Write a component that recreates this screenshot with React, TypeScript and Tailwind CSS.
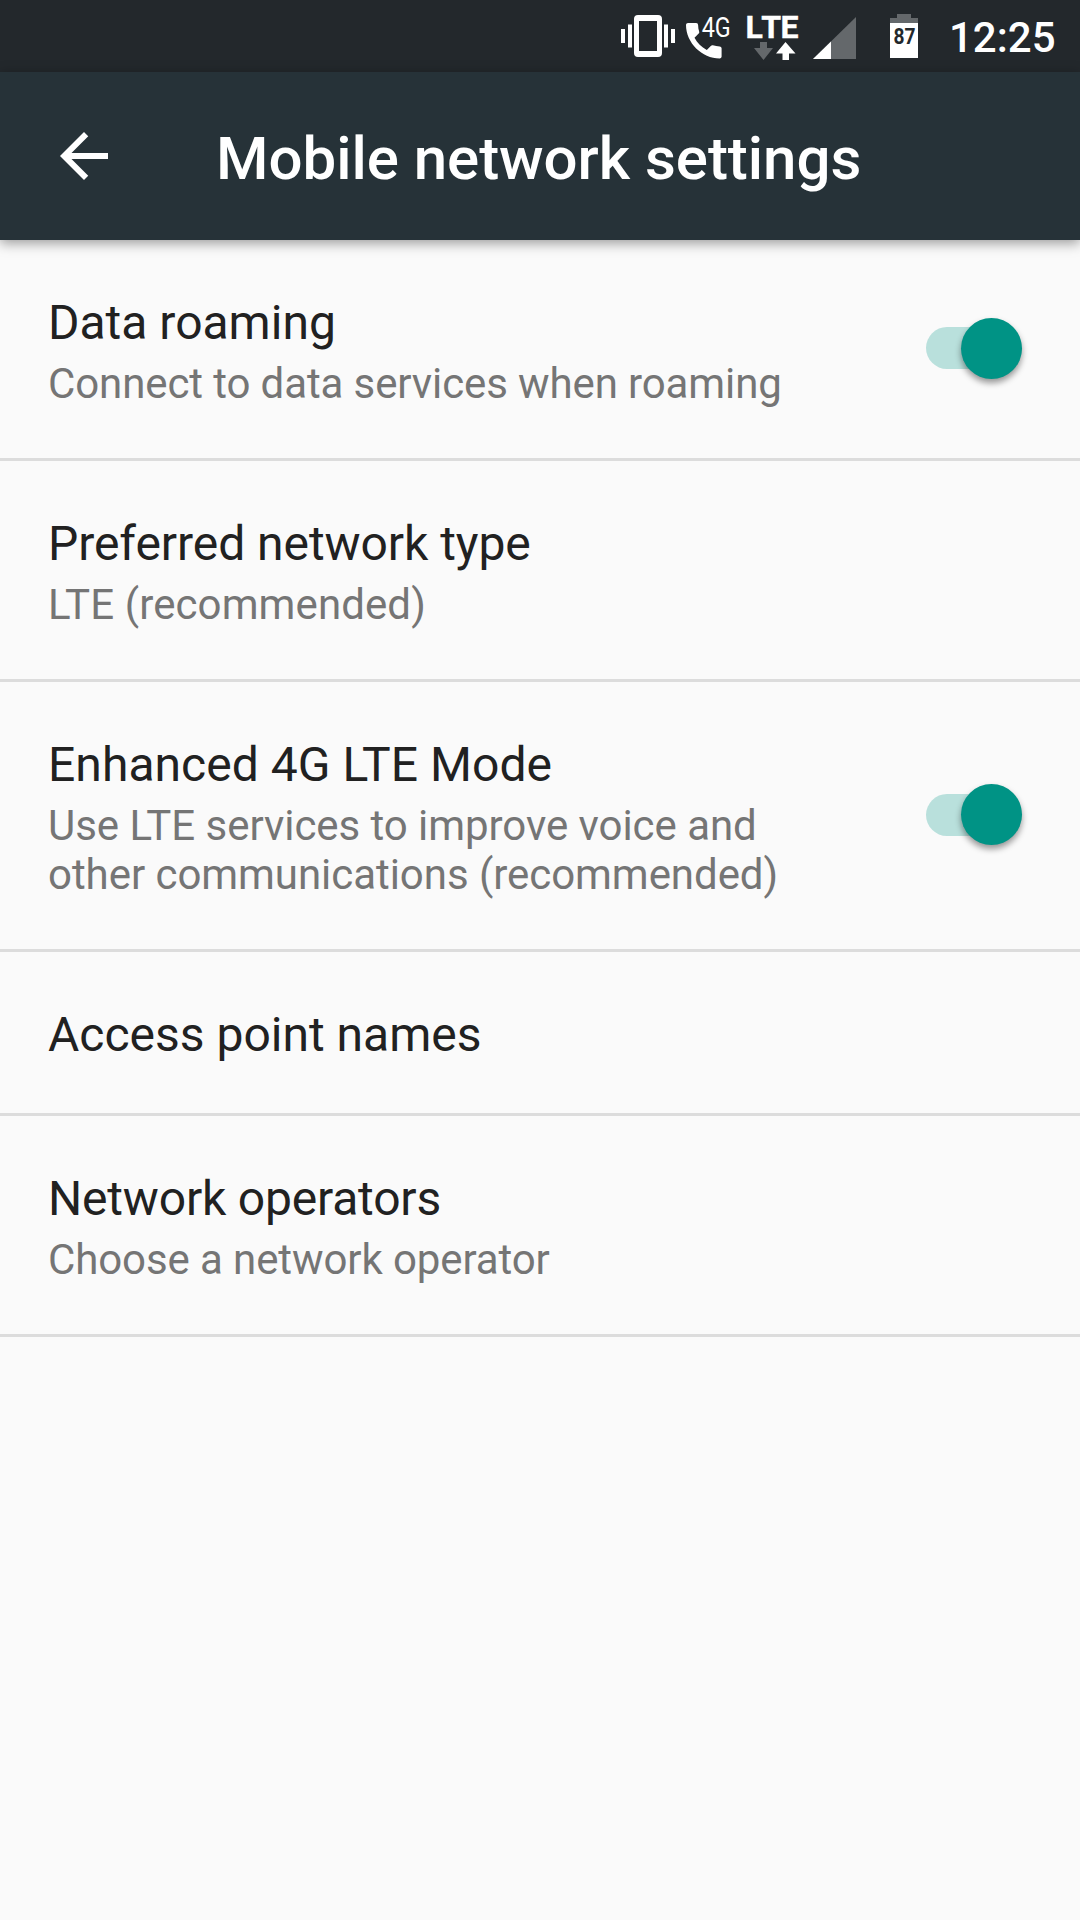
import React from 'react';

type Preference = {
  title: string;
  titleClass?: string;
  summary?: string;
  summaryClass?: string;
  enabled?: boolean;
};

const preferences: Preference[] = [
  {
    title: 'Data roaming',
    summary: 'Connect to data services when roaming',
    summaryClass: 'tracking-[-0.11px]',
    enabled: true,
  },
  {
    title: 'Preferred network type',
    titleClass: 'tracking-[-0.06px]',
    summary: 'LTE (recommended)',
    summaryClass: 'tracking-[0.1px]',
  },
  {
    title: 'Enhanced 4G LTE Mode',
    titleClass: 'tracking-[0.05px]',
    summary: 'Use LTE services to improve voice and other communications (recommended)',
    summaryClass: 'tracking-[-0.05px]',
    enabled: true,
  },
  { title: 'Access point names' },
  {
    title: 'Network operators',
    titleClass: 'tracking-[-0.19px]',
    summary: 'Choose a network operator',
    summaryClass: 'tracking-[-0.1px]',
  },
];

const VibrateIcon = () => (
  <svg width="54" height="42" viewBox="0 0 54 42" fill="#fff">
    <path fillRule="evenodd" d="M17 0h20a4 4 0 0 1 4 4v34a4 4 0 0 1-4 4H17a4 4 0 0 1-4-4V4a4 4 0 0 1 4-4zM18 6v30h18V6z" />
    <path d="M0 14h4v14H0zM7 9.500h4v23H7zM43 9.500h4v23h-4zM50 14h4v14h-4z" />
  </svg>
);

const CallIcon = () => (
  <svg width="50" height="54" viewBox="0 -10 50 54" fill="#fff">
    <path d="M2 8h8.200a1.900 1.900 0 0 1 1.900 1.900c0 2.400.4 4.600 1.100 6.800.2.600.1 1.300-.5 1.900l-4.200 4.200c2.800 5.400 6.900 9.400 12.300 12.200l4.200-4.200c.5-.5 1.200-.7 1.900-.5 2.100.7 4.400 1.100 6.800 1.100 1 0 1.900.8 1.900 1.900v8.200c0 1-.8 1.900-1.900 1.900C16 43.400 0 27.600 0 9.900 0 8.800.9 8 2 8z" />
    <text x="15.700" y="21.700" fontSize="27.500" fontFamily="Roboto, sans-serif" textLength="29" lengthAdjust="spacingAndGlyphs">4G</text>
  </svg>
);

const LteIcon = () => (
  <svg width="58" height="60" viewBox="-3 -14 58 60" fill="#fff">
    <text x="-1.500 14.200 33.400" y="22.700" fontSize="32" fontWeight="700" fontFamily="Roboto, sans-serif" stroke="#fff" strokeWidth="0.4">LTE</text>
    <path d="M13 27h7v6h6L16.500 45 7 33h6z" fill="#64686b" />
    <path d="M35.500 45v-6.500H29L38.500 27 48.500 38.500H42V45z" />
  </svg>
);

const SignalIcon = () => (
  <svg width="43" height="42" viewBox="0 0 43 42">
    <path d="M43 0v42H0z" fill="#64686b" />
    <path d="M18 24.500V42H0z" fill="#fff" />
  </svg>
);

const BatteryIcon = () => (
  <svg width="28" height="44" viewBox="0 0 28 44">
    <path d="M7 0h14v4h7v6H0V4h7z" fill="#64686b" />
    <path d="M0 9h28v35H0z" fill="#fff" />
    <text x="3.600" y="30.300" fontSize="21.500" fontWeight="700" fontFamily="Roboto, sans-serif" textLength="22" lengthAdjust="spacingAndGlyphs" fill="#23282c">87</text>
  </svg>
);

const StatusBar = () => (
  <div className="flex h-[72px] items-start bg-[#23282c] pl-[621px] text-white">
    <div className="pt-[15px]"><VibrateIcon /></div>
    <div className="pt-[5px] pl-[11px]"><CallIcon /></div>
    <div className="pt-px pl-2"><LteIcon /></div>
    <div className="pt-[17px] pl-[11px]"><SignalIcon /></div>
    <div className="pt-[14px] pl-[34px]"><BatteryIcon /></div>
    <span className="pt-[13px] pl-[31px] text-[42px] leading-[50px] font-medium">12:25</span>
  </div>
);

const Toggle = () => (
  <div className="flex h-[42px] w-24 items-center justify-end rounded-full bg-[#b9e0dc]">
    <div className="size-[61px] shrink-0 rounded-full bg-[#009385] shadow-[0_4px_6px_rgba(0,0,0,0.4)]" />
  </div>
);

const PreferenceRow = ({ title, titleClass = '', summary, summaryClass = '', enabled }: Preference) => (
  <li className="flex items-center border-b-[3px] border-[#dcdcdc] pr-[58px] pl-12">
    <div className="w-[760px] pt-[52px] pb-12">
      <h2 className={`text-[48px] leading-[61px] text-[#212121] ${titleClass}`}>{title}</h2>
      {summary && (
        <p className={`pt-[6px] pb-[2px] text-[42px] leading-[49px] text-[#757575] ${summaryClass}`}>{summary}</p>
      )}
    </div>
    {enabled && <div className="ml-auto pb-[1.2px]"><Toggle /></div>}
  </li>
);

const App = () => {
  return (
    <div className="h-[1920px] w-[1080px] overflow-hidden bg-[#fafafa] font-['Roboto',sans-serif]">
      <StatusBar />
      <header className="flex h-[168px] items-center bg-[#263238] pl-[60px] text-white shadow-[0_3px_12px_rgba(0,0,0,0.4)]">
        <svg width="48" height="48" viewBox="4 4 16 16" fill="currentColor">
          <path d="M20 11H7.830l5.590-5.590L12 4l-8 8 8 8 1.410-1.410L7.830 13H20v-2z" />
        </svg>
        <h1 className="pt-[5px] pl-[108px] text-[60px] leading-[72px] font-medium tracking-[-0.03px]">Mobile network settings</h1>
      </header>
      <ul>
        {preferences.map((item) => (
          <PreferenceRow key={item.title} {...item} />
        ))}
      </ul>
    </div>
  );
};

export default App;
